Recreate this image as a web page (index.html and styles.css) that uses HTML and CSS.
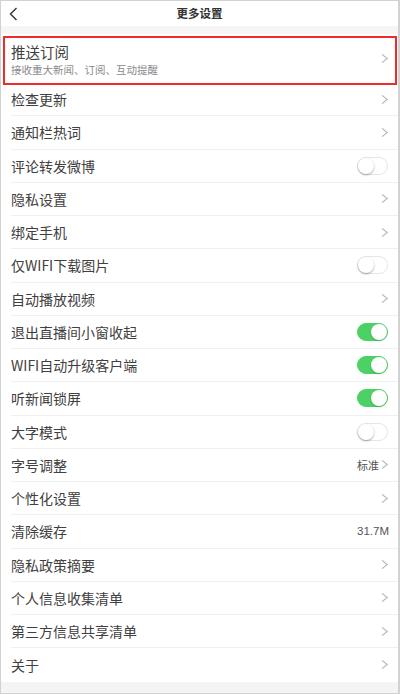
FILE: index.html
```html
<!DOCTYPE html>
<html lang="zh-CN">
<head>
<meta charset="utf-8">
<title>更多设置</title>
<link rel="stylesheet" href="styles.css">
</head>
<body>
<div class="screen">
  <header class="topbar">
    <span class="back">
      <svg width="9" height="14" viewBox="0 0 9 14"><path d="M7.5 1 L1.5 7 L7.5 13" fill="none" stroke="#333" stroke-width="1.4"/></svg>
    </span>
    <h1 class="title">更多设置</h1>
    <span></span>
  </header>
  <div class="band"></div>
  <ul class="list">
    <li class="item item-push">
      <div class="label-group">
        <span class="label">推送订阅</span>
        <span class="sub">接收重大新闻、订阅、互动提醒</span>
      </div>
      <span class="chev"></span>
    </li>
    <li class="item"><span class="label">检查更新</span><span class="chev"></span></li>
    <li class="item"><span class="label">通知栏热词</span><span class="chev"></span></li>
    <li class="item"><span class="label">评论转发微博</span><span class="toggle"></span></li>
    <li class="item"><span class="label">隐私设置</span><span class="chev"></span></li>
    <li class="item"><span class="label">绑定手机</span><span class="chev"></span></li>
    <li class="item"><span class="label">仅WIFI下载图片</span><span class="toggle"></span></li>
    <li class="item"><span class="label">自动播放视频</span><span class="chev"></span></li>
    <li class="item"><span class="label">退出直播间小窗收起</span><span class="toggle on"></span></li>
    <li class="item"><span class="label">WIFI自动升级客户端</span><span class="toggle on"></span></li>
    <li class="item"><span class="label">听新闻锁屏</span><span class="toggle on"></span></li>
    <li class="item"><span class="label">大字模式</span><span class="toggle"></span></li>
    <li class="item"><span class="label">字号调整</span><span class="right"><span class="value">标准</span><span class="chev"></span></span></li>
    <li class="item"><span class="label">个性化设置</span><span class="chev"></span></li>
    <li class="item"><span class="label">清除缓存</span><span class="value num">31.7M</span></li>
    <li class="item"><span class="label">隐私政策摘要</span><span class="chev"></span></li>
    <li class="item"><span class="label">个人信息收集清单</span><span class="chev"></span></li>
    <li class="item"><span class="label">第三方信息共享清单</span><span class="chev"></span></li>
    <li class="item last"><span class="label">关于</span><span class="chev"></span></li>
  </ul>
  <div class="bottom-band"></div>
</div>
</body>
</html>
```
FILE: styles.css
```css
* { box-sizing: border-box; }
html, body { margin: 0; padding: 0; background: #fff; }
body {
  font-family: "Noto Sans CJK SC", "Noto Sans", "Liberation Sans", sans-serif;
  color: #3a3a3a;
}
.screen {
  width: 400px;
  height: 694px;
  border: 1px solid #d2d2d2;
  border-right-width: 2px;
  display: flex;
  flex-direction: column;
  overflow: hidden;
  background: #fff;
}
.topbar {
  height: 25px;
  display: grid;
  grid-template-columns: 40px 1fr 40px;
  align-items: center;
  background: #fff;
}
.back {
  display: flex;
  align-items: center;
  padding-left: 8px;
  padding-top: 1px;
}
.title {
  margin: 0;
  text-align: center;
  font-size: 11.5px;
  font-weight: 700;
  color: #333;
  line-height: 1;
}
.band {
  height: 8px;
  background: #f5f5f5;
}
.list {
  list-style: none;
  margin: 0;
  padding: 0;
}
.item {
  display: flex;
  align-items: center;
  justify-content: space-between;
  height: 33.25px;
  margin-left: 10px;
  padding-right: 9px;
  border-bottom: 1px solid #f0f0f0;
}
.item.last { border-bottom: none; }
.item-push {
  position: relative;
  height: 49px;
  margin-left: 0;
  padding-left: 10px;
  border-bottom: none;
}
.item-push::after {
  content: "";
  position: absolute;
  left: 2px;
  right: 1px;
  top: 2px;
  bottom: -2px;
  border: 2px solid #ee2a2a;
  pointer-events: none;
}
.label-group {
  display: flex;
  flex-direction: column;
  gap: 3px;
  padding-top: 2px;
}
.label {
  font-size: 14px;
  line-height: 16px;
  color: #404040;
}
.item-push .label { font-size: 14.5px; line-height: 18px; }
.sub {
  font-size: 10.5px;
  line-height: 12px;
  color: #8a8a8a;
}
.chev {
  width: 7px;
  height: 7px;
  border-top: 1px solid #b4b4b4;
  border-right: 1px solid #b4b4b4;
  transform: rotate(45deg) skew(-6deg, -6deg);
  margin-right: 3px;
}
.right {
  display: flex;
  align-items: center;
  gap: 0;
}
.value {
  font-size: 11px;
  color: #555;
}
.value.num {
  font-family: "Liberation Sans", "Noto Sans", sans-serif;
  font-size: 11.5px;
  margin-right: 0;
}
.right .chev { margin-left: 0; }
.toggle {
  position: relative;
  width: 31px;
  height: 18px;
  border-radius: 9px;
  border: 1px solid #e6e6e6;
  background: #fff;
  margin-right: 1px;
}
.toggle::after {
  content: "";
  position: absolute;
  top: 0;
  left: 0;
  width: 16px;
  height: 16px;
  border-radius: 50%;
  background: #fff;
  box-shadow: 0 1px 2px rgba(0,0,0,0.35);
}
.toggle.on {
  background: #4cd264;
  border-color: #4cd264;
}
.toggle.on::after {
  left: auto;
  right: 0;
  box-shadow: 0 1px 2px rgba(0,0,0,0.2);
}
.bottom-band {
  flex: 1;
  background: #f4f4f4;
}
```
